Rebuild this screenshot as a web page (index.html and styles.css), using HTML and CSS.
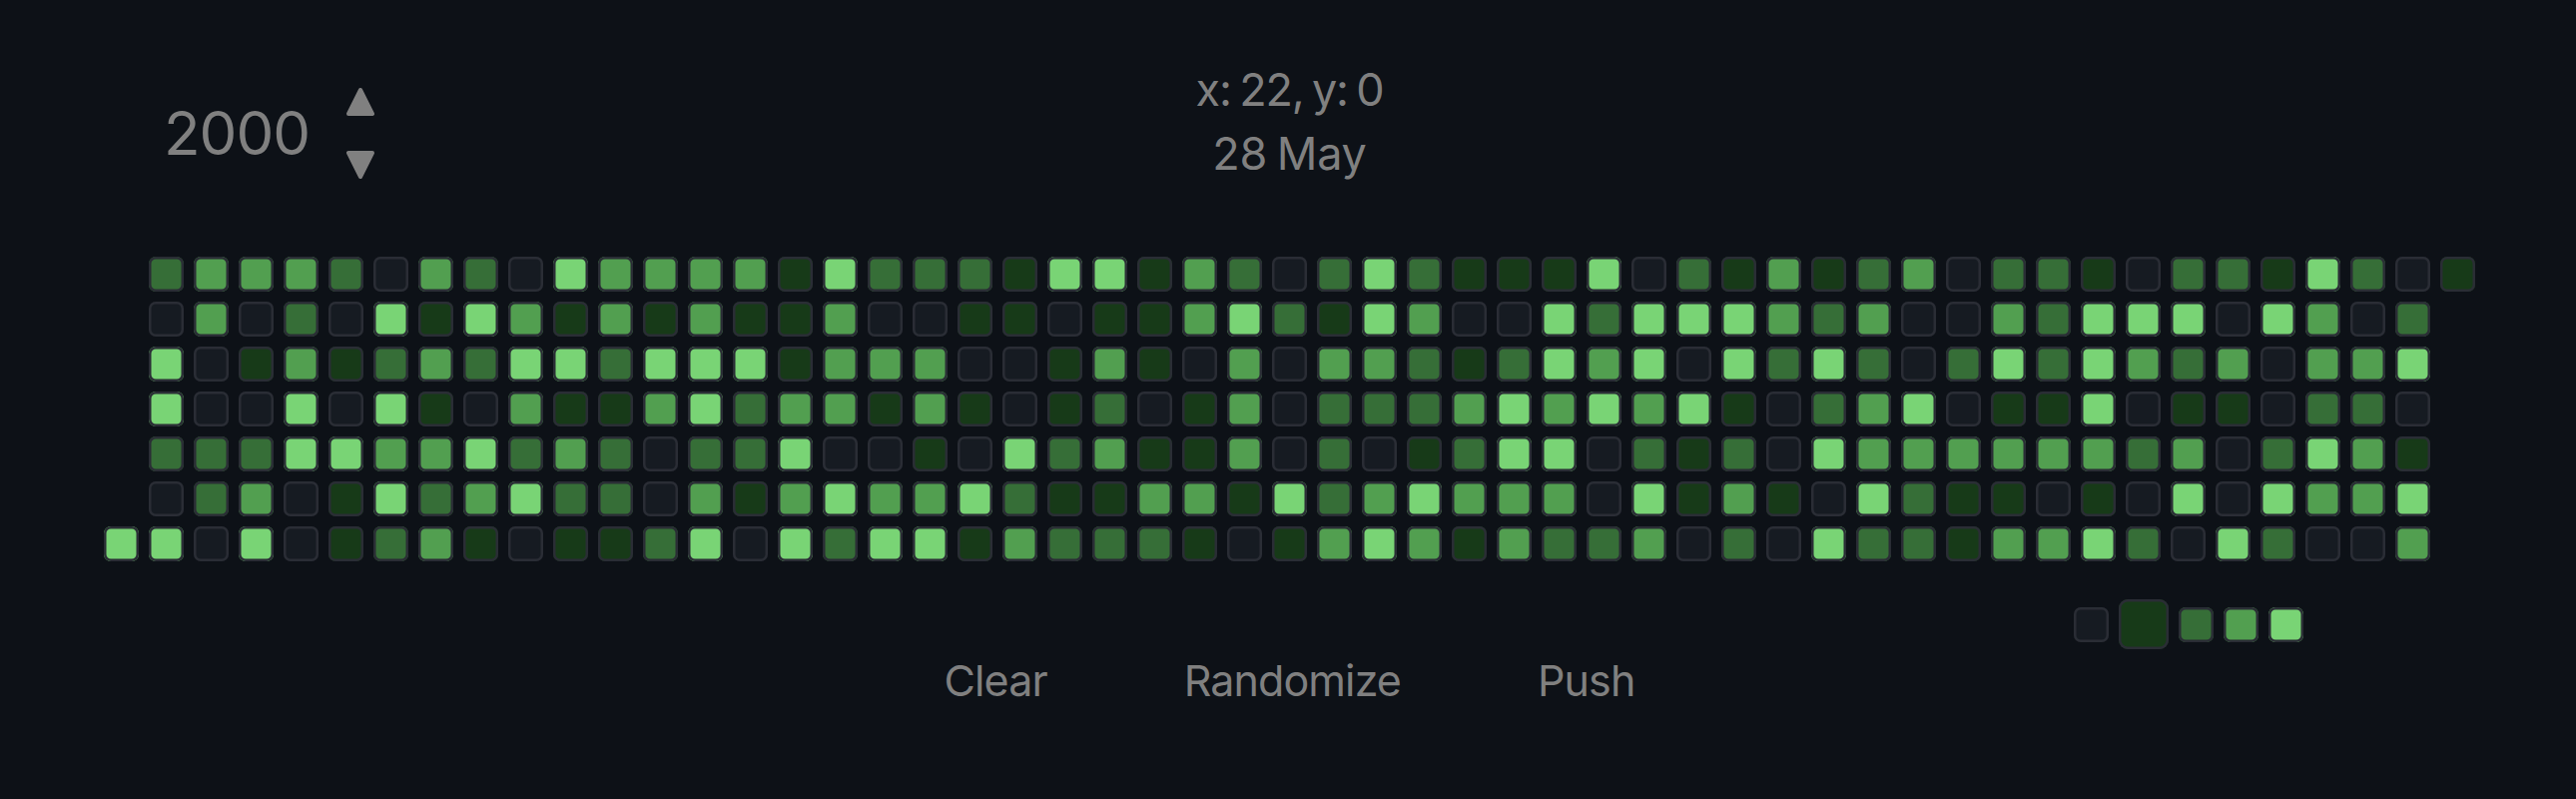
FILE: index.html

```html
<!DOCTYPE html>
<html lang="en">
<head>
  <meta charset="UTF-8" />
  <title>Contribution Graph Editor</title>
  <link rel="stylesheet" href="styles.css">
</head>
<body>
  <div class="page">
    <div class="header">
      <div class="year">
        <span class="year-value">2000</span>
        <div class="year-arrows">
          <button class="arrow" title="Next year">
            <svg width="28" height="29" viewBox="0 0 28 29"><path d="M14 2 L26 26 H2 Z" fill="#808080" stroke="#808080" stroke-width="4" stroke-linejoin="round"/></svg>
          </button>
          <button class="arrow" title="Previous year">
            <svg width="28" height="29" viewBox="0 0 28 29"><path d="M2 3 H26 L14 27 Z" fill="#808080" stroke="#808080" stroke-width="4" stroke-linejoin="round"/></svg>
          </button>
        </div>
      </div>
      <div class="info">
        <div class="coords">x: 22, y: 0</div>
        <div class="date">28 May</div>
      </div>
    </div>

    <div id="graph" class="graph"></div>

    <div class="legend">
      <div class="cell l0"></div>
      <div class="cell l1 selected"></div>
      <div class="cell l2"></div>
      <div class="cell l3"></div>
      <div class="cell l4"></div>
    </div>

    <div class="actions">
      <button class="action">Clear</button>
      <button class="action">Randomize</button>
      <button class="action">Push</button>
    </div>
  </div>

<script>
// one string per weekday, one char per week, "-" = no day
const rows = [
  "-2333203204333314222144132024211140213123022102214201",
  "-030204143131311300110113421430042444323003244404302-",
  "-401312324424441333001310303321243404242024243230334-",
  "-400404103113423313101201302223434341023401140110220-",
  "-222443342320224001042311302012440212043333332302431-",
  "-023014234220313433421133142343330413104211010404334-",
  "4404012310112404244132221013431322302042213342042003-"
];

const graph = document.getElementById("graph");
rows.forEach(row => {
  for (const ch of row) {
    const cell = document.createElement("div");
    cell.className = ch === "-" ? "cell empty" : "cell l" + ch;
    graph.appendChild(cell);
  }
});
</script>
</body>
</html>
```

FILE: styles.css

```css
body { margin: 0; background: #0d1117; color: #808080; font-family: Inter, "Liberation Sans", sans-serif; }
button { background: none; border: none; color: inherit; font: inherit; padding: 0; cursor: pointer; }

.page { padding: 58px 101px 0 104px; }

.header { display: grid; grid-template-columns: 1fr auto 1fr; }
.year { display: flex; align-items: center; padding: 25px 0 0 60px; height: 100px; gap: 37px; }
.year-value { font-size: 60px; line-height: 70px; letter-spacing: -1px; }
.year-arrows { display: flex; flex-direction: column; gap: 33px; }
.arrow { display: block; height: 29px; }
.arrow svg { display: block; }
.info { font-size: 45px; line-height: 64px; text-align: center; }
.coords { letter-spacing: -1.2px; word-spacing: -3px; }
.date { letter-spacing: -0.2px; word-spacing: -3px; }

.graph {
  display: grid; grid-template-columns: repeat(53, 35px); grid-auto-rows: 35px;
  gap: 10px; margin-top: 71px;
}

.cell { width: 35px; height: 35px; border-radius: 7px; box-shadow: inset 0 0 0 2.5px #2a2d35; }
.empty { visibility: hidden; }
.l0 { background: #161b22; }
.l1 { background: #173a18; }
.l2 { background: #366e37; }
.l3 { background: #529f50; }
.l4 { background: #79d475; }

.legend {
  display: flex; align-items: center; justify-content: flex-end; gap: 10px;
  height: 50px; margin-top: 38px; padding-right: 172px;
}
.legend .selected { width: 50px; height: 50px; border-radius: 9px; }

.actions { display: flex; justify-content: center; gap: 137px; margin-top: 6px; }
.action { font-size: 43px; line-height: 50px; letter-spacing: -0.9px; }
```
